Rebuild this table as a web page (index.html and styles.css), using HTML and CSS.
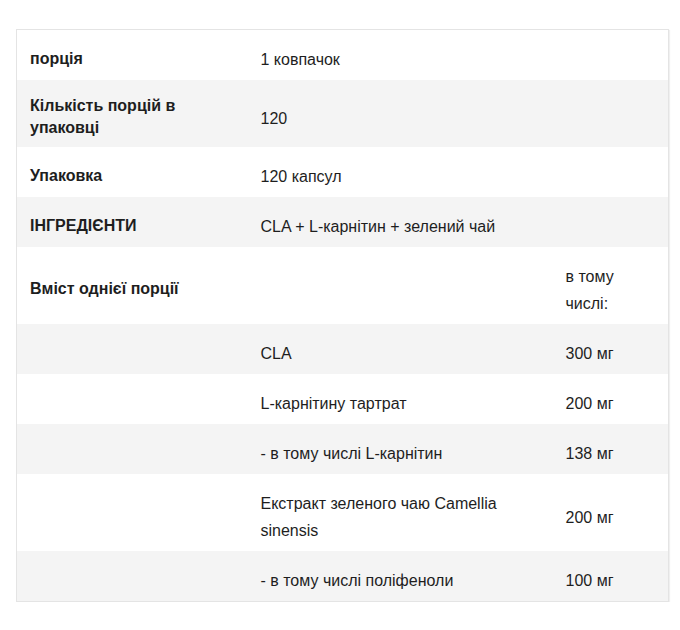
FILE: index.html
```html
<!DOCTYPE html>
<html lang="uk">
<head>
<meta charset="utf-8">
<title>Склад</title>
<link rel="stylesheet" href="styles.css">
</head>
<body>
<div class="wrap">
<table class="spec">
<colgroup><col class="c1"><col class="c2"><col class="c3"></colgroup>
<tbody>
<tr><td class="k">порція</td><td class="v" colspan="2">1 ковпачок</td></tr>
<tr class="alt"><td class="k">Кількість порцій в упаковці</td><td class="v" colspan="2">120</td></tr>
<tr><td class="k">Упаковка</td><td class="v" colspan="2">120 капсул</td></tr>
<tr class="alt"><td class="k">ІНГРЕДІЄНТИ</td><td class="v" colspan="2">CLA + L-карнітин + зелений чай</td></tr>
<tr><td class="k">Вміст однієї порції</td><td class="v"></td><td class="v n">в тому числі:</td></tr>
<tr class="alt"><td class="k"></td><td class="v">CLA</td><td class="v n">300 мг</td></tr>
<tr><td class="k"></td><td class="v">L-карнітину тартрат</td><td class="v n">200 мг</td></tr>
<tr class="alt"><td class="k"></td><td class="v">- в тому числі L-карнітин</td><td class="v n">138 мг</td></tr>
<tr><td class="k"></td><td class="v">Екстракт зеленого чаю Camellia sinensis</td><td class="v n">200 мг</td></tr>
<tr class="alt"><td class="k"></td><td class="v">- в тому числі поліфеноли</td><td class="v n">100 мг</td></tr>
</tbody>
</table>
</div>
</body>
</html>
```
FILE: styles.css
```css
html, body {
  margin: 0;
  padding: 0;
  background: #ffffff;
}
.wrap {
  padding: 29px 0 0 16px;
}
.spec {
  width: 652px;
  border-collapse: collapse;
  table-layout: fixed;
  border: 1px solid #e4e4e4;
  box-shadow: 1px 1px 1px rgba(0, 0, 0, 0.06);
  font-family: "Liberation Sans", Arial, sans-serif;
  font-size: 16px;
  color: #1e1e1e;
}
.c1 { width: 231px; }
.c2 { width: 305px; }
.c3 { width: 116px; }
.spec tr { background: #ffffff; }
.spec tr.alt { background: #f4f4f4; }
.spec td {
  vertical-align: middle;
  text-align: left;
}
.spec td.k {
  padding: 15px 13px 8px 13px;
  font-weight: 700;
  line-height: 22px;
}
.spec td.v {
  padding: 16px 13px 7px 13px;
  line-height: 27px;
}
```
